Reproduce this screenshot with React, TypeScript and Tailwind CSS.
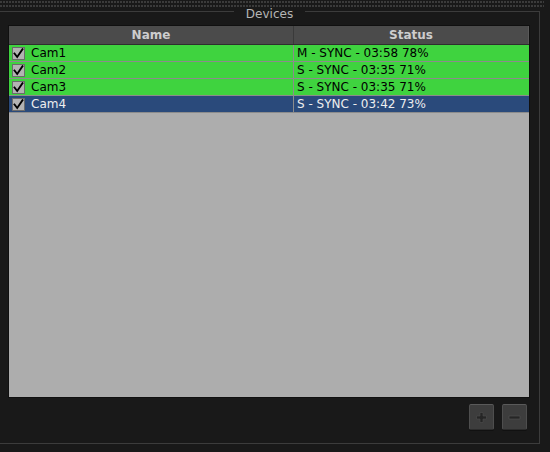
import React from 'react';

const rows = [
  { name: 'Cam1', status: 'M - SYNC - 03:58 78%', sel: false },
  { name: 'Cam2', status: 'S - SYNC - 03:35 71%', sel: false },
  { name: 'Cam3', status: 'S - SYNC - 03:35 71%', sel: false },
  { name: 'Cam4', status: 'S - SYNC - 03:42 73%', sel: true },
];

function Check() {
  return (
    <div className="w-[13px] h-[13px] shrink-0 bg-[#b3b3b3] border border-[#6b6b6b] flex items-center justify-center">
      <svg width="11" height="11" viewBox="0 0 11 11">
        <path d="M1.5 5.5 L4.2 9 L9.5 1.2" fill="none" stroke="#000" strokeWidth="1.9" strokeLinejoin="miter" strokeLinecap="square" />
      </svg>
    </div>
  );
}

function ToolButton({ kind }: { kind: 'plus' | 'minus' }) {
  return (
    <button className="w-[25px] h-[26px] rounded-[2px] bg-[#3d3d3d] border border-[#4e4e4e] border-t-[#5a5a5a] border-b-[#2c2c2c] flex items-center justify-center shadow-[0_1px_0_#111]">
      <svg width="13" height="13" viewBox="0 0 13 13">
        {kind === 'plus' ? (
          <>
            <path d="M5 1.5h3v3.5h3.5v3H8v3.5H5V8H1.5V5H5z" fill="#262626" stroke="#4f4f4f" strokeWidth="0.6" />
          </>
        ) : (
          <path d="M1 5h11v3H1z" fill="#262626" stroke="#555" strokeWidth="0.6" />
        )}
      </svg>
    </button>
  );
}

export default function App() {
  return (
    <div className="w-[550px] h-[452px] bg-[#191919] overflow-hidden font-['DejaVu_Sans',sans-serif] text-[12px] leading-[16px]">
      <div className="pt-px flex flex-col gap-[2px] w-[544px]">
        <div className="h-[2px] bg-[repeating-linear-gradient(90deg,#3b3b3b_0_2px,transparent_2px_3px)]" />
        <div className="h-[2px] bg-[repeating-linear-gradient(90deg,#3b3b3b_0_2px,transparent_2px_3px)]" />
      </div>

      <div className="mt-[4px] w-[540px] h-[433px] border-r border-b border-[#3c3c3c] flex flex-col">
        <div className="flex items-start">
          <div className="flex-1 h-px bg-[#3c3c3c]" />
          <span className="px-[12px] -mt-[4px] leading-[14px] text-[#b5b5b5]">Devices</span>
          <div className="flex-1 h-px bg-[#3c3c3c]" />
        </div>

        <div className="ml-[8px] mt-[4px] w-[522px] h-[373px] border border-[#101010] bg-[#adadad] flex flex-col">
          <div className="h-[19px] shrink-0 flex bg-[#4b4b4b] border-b border-[#2e2e2e] font-bold text-[#cdcdcd] leading-[18px]">
            <div className="w-[285px] border-r border-[#3a3a3a] text-center">Name</div>
            <div className="flex-1 text-center border-r border-[#5a5a5a]">Status</div>
          </div>
          {rows.map((r) => (
            <div
              key={r.name}
              className={
                'h-[17px] shrink-0 flex border-b border-[#8c8c8c] ' +
                (r.sel ? 'bg-[#2a4a7b] text-[#eeeeee]' : 'bg-[#3fd33f] text-[#000000]')
              }
            >
              <div className="w-[285px] border-r border-[#8c8c8c] flex items-center pl-[3px]">
                <Check />
                <span className="ml-[6px]">{r.name}</span>
              </div>
              <div className="flex-1 pl-[3px] flex items-center">{r.status}</div>
            </div>
          ))}
        </div>

        <div className="ml-[8px] w-[522px] mt-[6px] pr-[3px] flex justify-end gap-[8px]">
          <ToolButton kind="plus" />
          <ToolButton kind="minus" />
        </div>
      </div>
    </div>
  );
}
